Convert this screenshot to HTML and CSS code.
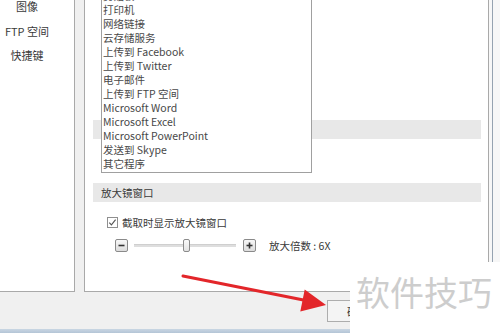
FILE: index.html
```html
<!DOCTYPE html>
<html lang="zh-CN">
<head>
<meta charset="utf-8">
<title>设置</title>
<link rel="stylesheet" href="styles.css">
</head>
<body>
<div class="app">
  <div class="main">
    <div class="nav-pane">
      <ul class="nav">
        <li>图像</li>
        <li>FTP 空间</li>
        <li>快捷键</li>
      </ul>
    </div>
    <div class="content-pane">
      <div class="spacer-top"></div>
      <div class="band"></div>
      <div class="spacer-mid"></div>
      <div class="band">放大镜窗口</div>
      <label class="check-row">
        <svg class="checkbox" width="11" height="11" viewBox="0 0 11 11">
          <rect x="0.5" y="0.5" width="10" height="10" fill="#fff" stroke="#8f8f8f"/>
          <polyline points="2.3,5.6 4.4,7.8 8.6,2.6" fill="none" stroke="#555" stroke-width="1.1"/>
        </svg>
        <span>截取时显示放大镜窗口</span>
      </label>
      <div class="slider-row">
        <span class="step-btn">
          <svg width="13" height="13" viewBox="0 0 13 13"><line x1="3.5" y1="6.5" x2="9.5" y2="6.5" stroke="#333" stroke-width="1.6"/></svg>
        </span>
        <span class="track"><span class="thumb"></span></span>
        <span class="step-btn">
          <svg width="13" height="13" viewBox="0 0 13 13"><line x1="3.5" y1="6.5" x2="9.5" y2="6.5" stroke="#333" stroke-width="1.6"/><line x1="6.5" y1="3.5" x2="6.5" y2="9.5" stroke="#333" stroke-width="1.6"/></svg>
        </span>
        <span class="zoom-label">放大倍数 : 6X</span>
      </div>

      <ul class="dropdown">
        <li>剪贴板</li>
        <li>打印机</li>
        <li>网络链接</li>
        <li>云存储服务</li>
        <li>上传到 Facebook</li>
        <li>上传到 Twitter</li>
        <li>电子邮件</li>
        <li>上传到 FTP 空间</li>
        <li>Microsoft Word</li>
        <li>Microsoft Excel</li>
        <li>Microsoft PowerPoint</li>
        <li>发送到 Skype</li>
        <li>其它程序</li>
      </ul>
    </div>
    <div class="edge-strip"><div class="edge-line"></div></div>
  </div>
  <div class="footer">
    <button class="ok-btn">确定</button>
  </div>
  <div class="footer-line"></div>

  <svg class="arrow" width="500" height="333" viewBox="0 0 500 333">
    <line x1="183" y1="276" x2="306" y2="300.5" stroke="#e3262a" stroke-width="3" stroke-linecap="round"/>
    <polygon points="326,305 300.3,311.5 304.7,289.4" fill="#e3262a"/>
  </svg>
  <div class="watermark">软件技巧</div>
</div>
</body>
</html>
```

FILE: styles.css
```css
* { box-sizing: border-box; }

html, body {
  margin: 0;
  padding: 0;
}

body {
  width: 500px;
  height: 333px;
  overflow: hidden;
  background: #f0f0f0;
  font-family: "Noto Sans CJK SC", "Noto Sans", sans-serif;
  font-size: 10.5px;
  color: #3a3a3a;
}

.app {
  position: relative;
  width: 500px;
  height: 333px;
  display: flex;
  flex-direction: column;
}

.main {
  display: flex;
  height: 292px;
  flex: none;
}

.nav-pane {
  width: 75px;
  flex: none;
  background: #fff;
  border-right: 1px solid #a9a9a9;
  border-bottom: 1px solid #a9a9a9;
  overflow: hidden;
}

.nav {
  list-style: none;
  margin: -6px 0 0 0;
  padding: 0;
  width: 54px;
  font-size: 11px;
  color: #3a3a3a;
}

.nav li {
  height: 24.5px;
  line-height: 24.5px;
  text-align: center;
  white-space: nowrap;
}

.content-pane {
  position: relative;
  width: 405px;
  flex: none;
  margin-left: 9px;
  background: #fff;
  border-left: 1px solid #a9a9a9;
  border-right: 1px solid #a9a9a9;
  border-bottom: 1px solid #a9a9a9;
  padding: 0 7px 0 8px;
}

.spacer-top { height: 120px; }
.spacer-mid { height: 44px; }

.band {
  height: 19px;
  line-height: 19px;
  background: #e8e8e8;
  padding-left: 8px;
  color: #3a3a3a;
}

.check-row {
  display: flex;
  align-items: center;
  height: 16px;
  margin-top: 12px;
  padding-left: 14px;
  gap: 4px;
}

.checkbox { display: block; flex: none; }

.slider-row {
  display: flex;
  align-items: center;
  height: 16px;
  margin-top: 7px;
  padding-left: 22px;
}

.step-btn {
  width: 13px;
  height: 13px;
  flex: none;
  border: 1px solid #8a8a8a;
  border-radius: 2px;
  background: linear-gradient(#f7f7f7, #dcdcdc);
  display: flex;
  align-items: center;
  justify-content: center;
}

.step-btn svg { display: block; flex: none; margin: -1px; }

.track {
  position: relative;
  width: 102px;
  height: 3px;
  margin: 0 7px 0 6px;
  background: #dedede;
  border-top: 1px solid #cfcfcf;
  flex: none;
}

.thumb {
  position: absolute;
  left: 49px;
  top: -6px;
  width: 7px;
  height: 13px;
  border: 1px solid #8a8a8a;
  border-radius: 2px;
  background: linear-gradient(#fafafa, #e2e2e2);
}

.zoom-label {
  margin-left: 13px;
  white-space: nowrap;
}

.dropdown {
  position: absolute;
  left: 16px;
  top: -13px;
  width: 211px;
  margin: 0;
  padding: 1px 0;
  list-style: none;
  background: #fff;
  border: 1px solid #a0a0a0;
  color: #484848;
}

.dropdown li {
  height: 14px;
  line-height: 14px;
  padding-left: 1px;
  white-space: nowrap;
}

.edge-strip {
  flex: 1;
  background: #f7f7f7;
  padding-left: 3px;
}

.edge-line {
  width: 1px;
  height: 100%;
  background: #96a3b1;
}

.footer {
  height: 37px;
  flex: none;
  padding-top: 8px;
  padding-left: 327px;
}

.ok-btn {
  width: 60px;
  height: 22px;
  border: 1px solid #adadad;
  background: #f4f4f4;
  font-family: inherit;
  font-size: 10.5px;
  color: #333;
  padding: 0 0 0 19px;
  text-align: left;
}

.footer-line {
  flex: 1;
  background: linear-gradient(#c9d6e3, #b4c5d6);
}

.arrow {
  position: absolute;
  left: 0;
  top: 0;
  pointer-events: none;
}

.watermark {
  position: absolute;
  left: 350px;
  top: 262px;
  width: 150px;
  height: 71px;
  background: #fff;
  color: #cdcdcd;
  font-size: 34px;
  line-height: 34px;
  padding: 13px 0 0 6px;
  white-space: nowrap;
  font-family: "Noto Sans CJK SC", sans-serif;
}
```
